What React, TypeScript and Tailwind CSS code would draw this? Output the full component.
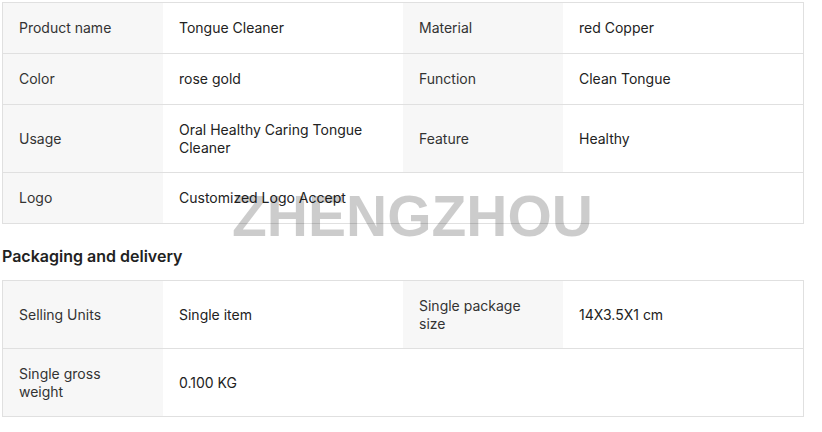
const specs: [string, string][][] = [
  [['Product name', 'Tongue Cleaner'], ['Material', 'red Copper']],
  [['Color', 'rose gold'], ['Function', 'Clean Tongue']],
  [['Usage', 'Oral Healthy Caring Tongue Cleaner'], ['Feature', 'Healthy']],
  [['Logo', 'Customized Logo Accept']],
];

const packaging: [string, string][][] = [
  [['Selling Units', 'Single item'], ['Single package size', '14X3.5X1 cm']],
  [['Single gross weight', '0.100 KG']],
];

function SpecTable({ rows }: { rows: [string, string][][] }) {
  return (
    <div className="border border-[#e0e0e0] bg-white">
      {rows.map((row, i) => (
        <div
          key={i}
          className={`grid grid-cols-[160px_240px_160px_1fr] ${i < rows.length - 1 ? 'border-b border-[#e0e0e0]' : ''}`}
        >
          {[0, 1].map((j) => {
            const cell = row[j];
            if (!cell) {
              return <div key={j} className="col-span-2" />;
            }
            return (
              <div key={j} className="contents">
                <div className="flex min-h-[50px] items-center bg-[#f7f7f7] px-4 py-4 text-[14px] leading-[17.5px] text-[#333]">
                  {cell[0]}
                </div>
                <div className="flex min-h-[50px] items-center px-4 py-4 text-[14px] leading-[17.5px] text-[#222]">
                  {cell[1]}
                </div>
              </div>
            );
          })}
        </div>
      ))}
    </div>
  );
}

export default function App() {
  return (
    <div className="relative h-[432px] w-[822px] overflow-hidden bg-white font-['Inter','Liberation_Sans',sans-serif]">
      <div className="ml-[2px] mt-[2px] w-[802px]">
        <SpecTable rows={specs} />
        <h2 className="mb-[12px] mt-[20px] text-[16px] font-semibold leading-6 text-[#222]">
          Packaging and delivery
        </h2>
        <SpecTable rows={packaging} />
      </div>
      <div className="pointer-events-none absolute left-[232px] top-[180px] select-none font-['Liberation_Sans',Arial,sans-serif] text-[57px] font-bold leading-[72px] text-black/20">
        ZHENGZHOU
      </div>
    </div>
  );
}
